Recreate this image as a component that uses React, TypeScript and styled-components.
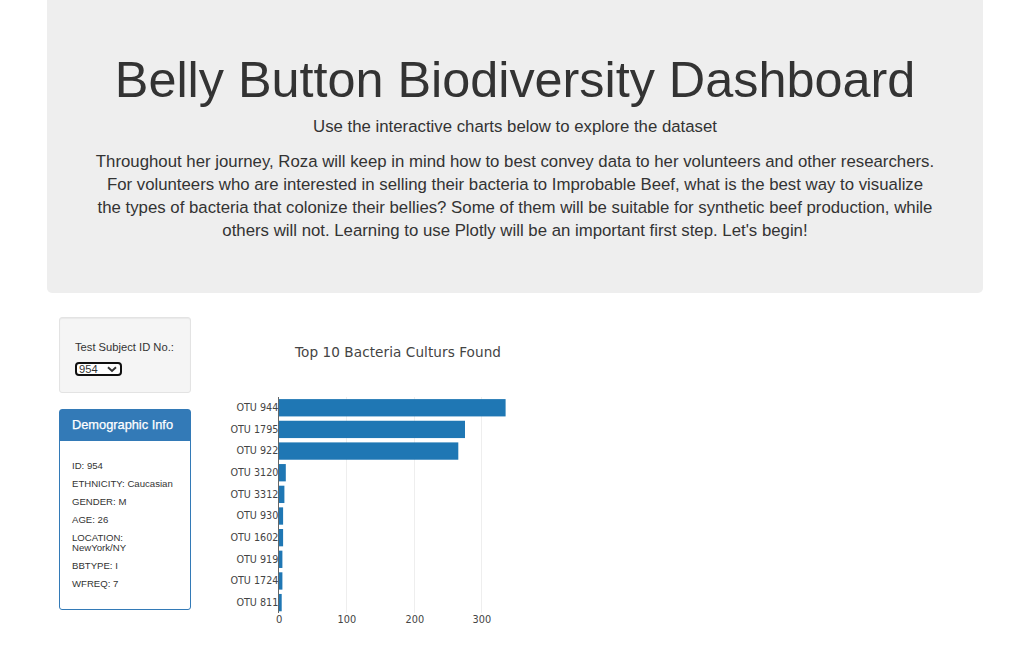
import React from "react";
import styled, { createGlobalStyle } from "styled-components";

const GlobalStyle = createGlobalStyle`
  *, *::before, *::after { box-sizing: border-box; }
  body {
    margin: 0;
    background: #fff;
    color: #333;
    font-family: "Liberation Sans", Arial, sans-serif;
  }
`;

const Page = styled.div`
  width: 936px;
  margin-left: 47px;
`;

const Jumbotron = styled.header`
  height: 293px;
  padding-top: 52px;
  background: #eee;
  border-radius: 0 0 5px 5px;
  text-align: center;
`;

const Title = styled.h1`
  margin: 0;
  font-size: 50.4px;
  font-weight: normal;
  letter-spacing: -0.02px;
  line-height: 55px;
  white-space: nowrap;
`;

const Lead = styled.p`
  margin: 8px 0 12px;
  font-size: 16.8px;
  line-height: 23px;
`;

const Line = styled.span`
  display: block;
  white-space: nowrap;
`;

const Content = styled.main`
  display: flex;
  padding: 24px 12px 0;
`;

const Sidebar = styled.aside`
  width: 132px;
`;

const Well = styled.section`
  height: 76px;
  padding: 21px 15px 0;
  background: #f5f5f5;
  border: 1px solid #e3e3e3;
  border-radius: 3px;
  box-shadow: inset 0 1px 1px rgba(0, 0, 0, 0.05);
`;

const Label = styled.label`
  display: block;
  font-size: 11.2px;
  line-height: 16px;
  white-space: nowrap;
`;

const SelectBox = styled.div`
  position: relative;
  width: 47px;
  height: 14px;
  margin-top: 7px;
`;

const Select = styled.select`
  display: block;
  appearance: none;
  width: 47px;
  height: 14px;
  padding: 0 0 0 2px;
  border: 2px solid #101010;
  border-radius: 4px;
  outline: none;
  background: #fff;
  color: #333;
  font: 11.2px/10px "Liberation Sans", Arial, sans-serif;
`;

const Chevron = styled.svg`
  position: absolute;
  top: 4px;
  right: 5px;
  pointer-events: none;
`;

const Panel = styled.section`
  height: 201px;
  margin-top: 16px;
  border: 1px solid #337ab7;
  border-radius: 3px;
  background: #fff;
`;

const PanelHeading = styled.h3`
  height: 31px;
  margin: 0;
  padding-left: 12px;
  background: #337ab7;
  color: #fff;
  font-size: 12.8px;
  font-weight: normal;
  line-height: 30px;
  white-space: nowrap;
  -webkit-text-stroke: 0.25px #fff;
`;

const PanelBody = styled.div`
  display: flex;
  flex-direction: column;
  gap: 8px;
  padding: 20px 12px 0;
`;

const Fact = styled.div`
  font-size: 9.6px;
  line-height: 10px;
`;

const Chart = styled.svg`
  display: block;
  margin-left: 29px;
  font-family: Verdana, "DejaVu Sans", sans-serif;
  fill: #444;
`;

const leadLines = [
  "Throughout her journey, Roza will keep in mind how to best convey data to her volunteers and other researchers.",
  "For volunteers who are interested in selling their bacteria to Improbable Beef, what is the best way to visualize",
  "the types of bacteria that colonize their bellies? Some of them will be suitable for synthetic beef production, while",
  "others will not. Learning to use Plotly will be an important first step. Let's begin!",
];

const facts = [
  "ID: 954",
  "ETHNICITY: Caucasian",
  "GENDER: M",
  "AGE: 26",
  "LOCATION: NewYork/NY",
  "BBTYPE: I",
  "WFREQ: 7",
];

const bars = [
  { name: "OTU 944", end: 505.6 },
  { name: "OTU 1795", end: 465 },
  { name: "OTU 922", end: 458.3 },
  { name: "OTU 3120", end: 285.8 },
  { name: "OTU 3312", end: 284.4 },
  { name: "OTU 930", end: 283.1 },
  { name: "OTU 1602", end: 283.1 },
  { name: "OTU 919", end: 282.4 },
  { name: "OTU 1724", end: 282.4 },
  { name: "OTU 811", end: 281.7 },
];

const ticks = [
  { x: 279, value: "0", width: 6.4 },
  { x: 346.5, value: "100", width: 18.6 },
  { x: 414.5, value: "200", width: 18.6 },
  { x: 481.5, value: "300", width: 18.6 },
];

const PITCH = 21.65;

function BarChart() {
  return (
    <Chart width={300} height={320} viewBox="220 317 300 320">
      <text x={295} y={357} fontSize={13.6} textLength={206}>
        Top 10 Bacteria Culturs Found
      </text>
      {ticks.slice(1).map((t) => (
        <rect key={t.value} x={t.x - 0.5} y={397} width={1} height={216} fill="#eee" />
      ))}
      {bars.map((b, i) => (
        <rect
          key={b.name}
          x={279}
          y={399.1 + i * PITCH}
          width={b.end - 279}
          height={17.32}
          fill="#1f77b4"
        />
      ))}
      <rect x={278} y={397} width={1} height={216} fill="#666" />
      {bars.map((b, i) => {
        const width = b.name.length === 8 ? 48 : 42;
        return (
          <text
            key={b.name}
            x={278.4 - width}
            y={Math.round(411 + i * PITCH)}
            fontSize={9.6}
            textLength={width}
            lengthAdjust="spacingAndGlyphs"
          >
            {b.name}
          </text>
        );
      })}
      {ticks.map((t) => (
        <text
          key={t.value}
          x={t.x + 0.3 - t.width / 2}
          y={623}
          fontSize={9.6}
          textLength={t.width}
          lengthAdjust="spacingAndGlyphs"
        >
          {t.value}
        </text>
      ))}
    </Chart>
  );
}

export default function App() {
  return (
    <>
      <GlobalStyle />
      <Page>
        <Jumbotron>
          <Title>Belly Button Biodiversity Dashboard</Title>
          <Lead>Use the interactive charts below to explore the dataset</Lead>
          <Lead>
            {leadLines.map((line) => (
              <Line key={line}>{line}</Line>
            ))}
          </Lead>
        </Jumbotron>
        <Content>
          <Sidebar>
            <Well>
              <Label htmlFor="subject">Test Subject ID No.:</Label>
              <SelectBox>
                <Select id="subject" defaultValue="954">
                  <option value="954">954</option>
                </Select>
                <Chevron width={10} height={7} viewBox="0 0 10 7">
                  <path d="M1 1.2 5 5l4-3.8" fill="none" stroke="#333" strokeWidth={1.9} />
                </Chevron>
              </SelectBox>
            </Well>
            <Panel>
              <PanelHeading>Demographic Info</PanelHeading>
              <PanelBody>
                {facts.map((fact) => (
                  <Fact key={fact}>{fact}</Fact>
                ))}
              </PanelBody>
            </Panel>
          </Sidebar>
          <BarChart />
        </Content>
      </Page>
    </>
  );
}
